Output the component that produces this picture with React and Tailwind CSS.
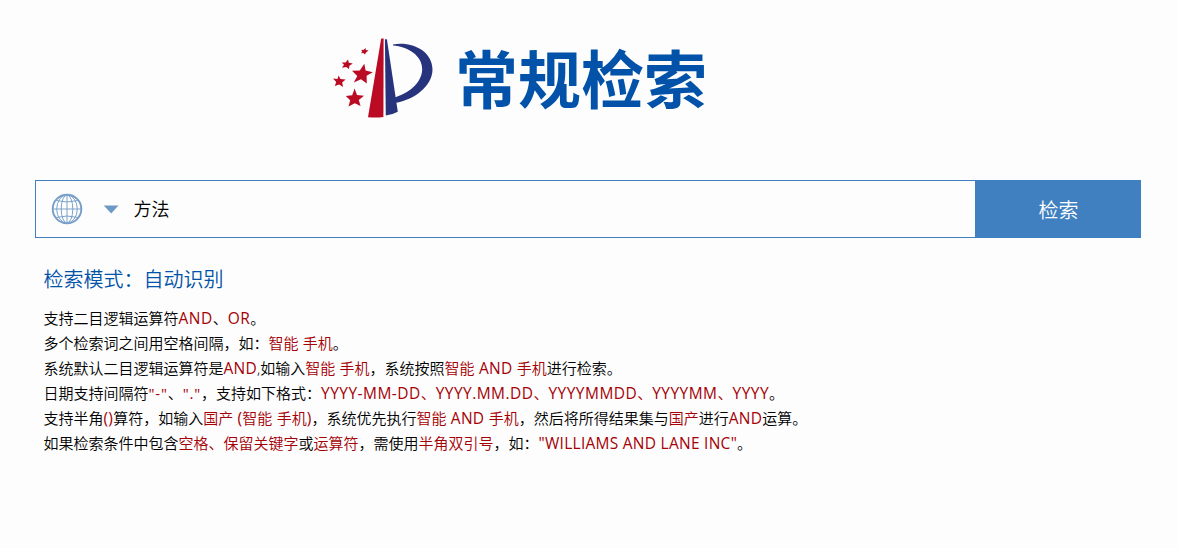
const R = ({ children, className = '' }) => <span className={`text-[#a50005] ${className}`}>{children}</span>;
const L = ({ children }) => <span className="font-normal text-[15.5px] leading-none tracking-[0.26px]">{children}</span>;
const Q = ({ children }) => <span className="font-normal tracking-[0.8px]">{children}</span>;
const D = ({ children }) => <span className="font-normal text-[15.5px] leading-none tracking-[0.46px]">{children}</span>;

function Logo() {
  return (
    <svg width="104" height="84" viewBox="0 0 104 84" className="shrink-0">
      <path d="M51.2 2.6 L53.6 2.6 L53.4 81 Q46 82 38 81.2 Z" fill="#bb0a24" />
      <path d="M54.9 3.2 L56.9 3.2 L67.8 75.8 Q63 78.5 55.8 79.6 Z" fill="#27337c" />
      <path d="M63 8.4 C82 5 102.5 15 102.5 33.5 C102.5 50 84 64 65.6 66.8 L65 61.4 C78 57 91.5 48 92.2 33.5 C92.5 20 78 10.5 63 9.6 Z" fill="#27337c" />
      <g fill="#bb0a24">
        <polygon points="34.3,27.8 35.6,34.6 42.8,36.2 36.6,39.8 36.8,47.6 31,43.2 23.8,46.4 27.3,40 22,34.8 29.8,34.4" />
        <polygon points="24.6,52.6 27,59 34,59.7 28.8,64 30.6,70 24.8,67.3 18.5,70.4 20.2,64.3 15.8,60 22.2,59.2" />
        <polygon points="8.6,39.6 10.4,43.1 15.6,43.6 12.2,46.6 13,51 9.2,48.5 4.8,50 6.2,46 3,42.4 7.5,43" />
        <polygon points="18,23.4 18.8,26.8 22.8,27.4 19.4,29.8 19,33 16.2,30.9 12,31.8 14,28.8 11.8,26.6 15.6,26.6" />
        <polygon points="35.6,12 35.8,14 38.6,14.6 36,16.6 35,18.6 33.3,17 31,17.2 32.3,15.4 31.2,14 33.8,13.8" />
      </g>
    </svg>
  );
}

function Globe() {
  return (
    <svg width="32" height="32" viewBox="0 0 32 32" fill="none" stroke="#7da3cb">
      <circle cx="16" cy="16" r="14.3" strokeWidth="1.9" stroke="#759dc8" />
      <ellipse cx="16" cy="16" rx="10.3" ry="14" />
      <ellipse cx="16" cy="16" rx="5.8" ry="14" />
      <path d="M16 2V30M2 16H30M5 7.5Q16 10.5 27 7.5M5 24.5Q16 21.5 27 24.5" />
    </svg>
  );
}

export default function App() {
  return (
    <main className="h-[548px] w-[1178px] overflow-hidden bg-[#fdfdfd] font-['Open_Sans','Noto_Sans_CJK_SC',sans-serif] font-[350] text-black">
      <header className="flex h-[180px] items-start pl-[330px] pt-[36px]">
        <Logo />
        <h1 className="ml-[21px] mt-[-6px] whitespace-nowrap font-['Noto_Sans_CJK_SC',sans-serif] text-[63px] font-bold leading-[92px] text-[#0152a8]">常规检索</h1>
      </header>
      <form className="ml-[35px] flex h-[58px] w-[1106px]">
        <div className="flex w-[940px] items-center border border-r-0 border-[#4080c1] bg-[#fdfdfd] pl-[15px]">
          <Globe />
          <svg width="16" height="9" viewBox="0 0 16 9" className="ml-5"><path d="M.8 .5H15.5L8.2 8.5Z" fill="#6e98c6" /></svg>
          <span className="ml-[14.5px] text-[18px] leading-[26px]">方法</span>
        </div>
        <button type="button" className="flex-1 bg-[#4080c1] pl-[1px] pt-[3px] text-xl text-white">检索</button>
      </form>
      <section className="pl-[43.5px] pt-[27px]">
        <h2 className="text-[20px] leading-[30px] text-[#0152a8]">检索模式：自动识别</h2>
        <div className="mt-[11px] whitespace-nowrap text-[15px] leading-[25px]">
          <p>支持二目逻辑运算符<R><D>AND</D></R>、<R><D>OR</D></R>。</p>
          <p>多个检索词之间用空格间隔，如：<R>智能<L> </L>手机</R>。</p>
          <p>系统默认二目逻辑运算符是<R><L>AND</L></R>,如输入<R>智能<L> </L>手机</R>，系统按照<R>智能<L> AND </L>手机</R>进行检索。</p>
          <p>日期支持间隔符<R><Q>"-"</Q></R>、<R><Q>"."</Q></R>，支持如下格式：<R><D>YYYY-MM-DD</D>、<D>YYYY.MM.DD</D>、<D>YYYYMMDD</D>、<D>YYYYMM</D>、<D>YYYY</D></R>。</p>
          <p>支持半角<R><L>()</L></R>算符，如输入<R>国产<L> (</L>智能<L> </L>手机<L>)</L></R>，系统优先执行<R>智能<L> AND </L>手机</R>，然后将所得结果集与<R>国产</R>进行<R><L>AND</L></R>运算。</p>
          <p>如果检索条件中包含<R>空格、保留关键字</R>或<R>运算符</R>，需使用<R>半角双引号</R>，如：<R><L>"WILLIAMS AND LANE INC"</L></R>。</p>
        </div>
      </section>
    </main>
  );
}
